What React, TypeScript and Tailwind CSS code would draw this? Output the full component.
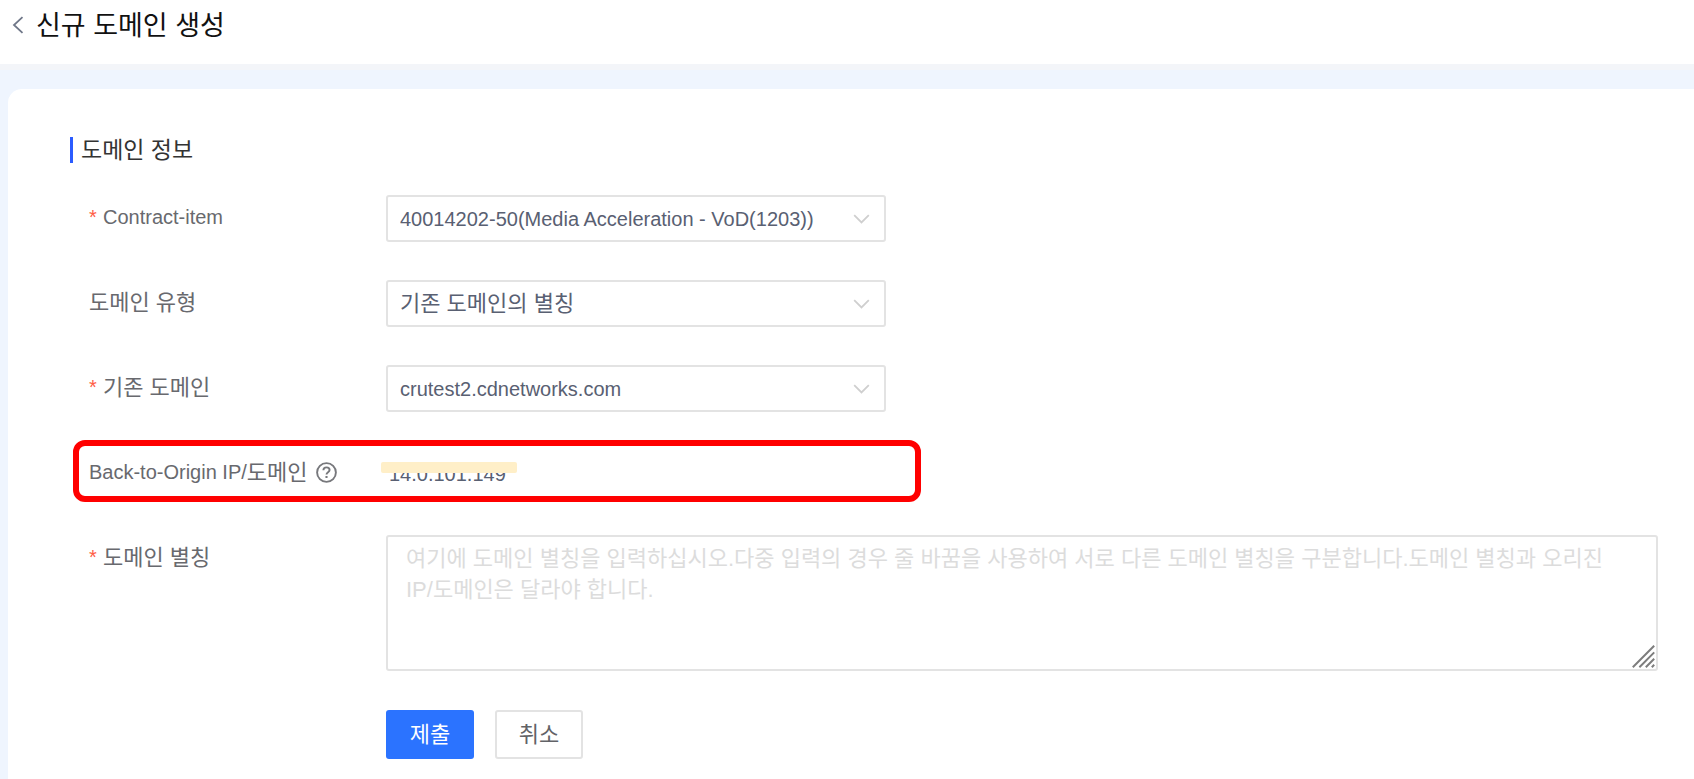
import type { ReactNode } from "react";

const controlBorder = "border-2 border-[#e3e3e3] rounded-[3px]";

function Label({ htmlFor, required, children }: { htmlFor: string; required?: boolean; children: ReactNode }) {
  return (
    <label htmlFor={htmlFor} className="flex h-[44px] w-[297px] shrink-0 items-center text-[#68696e]">
      {required && <span className="w-[14px] text-[20px] text-[#ff5c45]">*</span>}
      {children}
    </label>
  );
}

function SelectField({ id, value, korean }: { id: string; value: string; korean?: boolean }) {
  return (
    <div className="relative w-full max-w-[500px]">
      <select
        id={id}
        defaultValue={value}
        className={`${controlBorder} h-[47px] w-full appearance-none bg-white pr-10 pl-3 text-[#596072] ${korean ? "text-[22px]" : "text-[20px]"}`}
      >
        <option value={value}>{value}</option>
      </select>
      <svg
        className="pointer-events-none absolute top-[19px] right-4 h-[10px] w-[17px]"
        viewBox="0 0 17 10"
        fill="none"
        stroke="#cfcfcf"
        strokeWidth="1.8"
        aria-hidden="true"
      >
        <path d="M1.2 1.2 8.5 8.4l7.3-7.2" />
      </svg>
    </div>
  );
}

export default function App() {
  return (
    <div className="flex min-h-screen flex-col bg-[#eff5fe] font-['Liberation_Sans','Noto_Sans_CJK_KR',sans-serif]">
      <header className="flex h-[70px] items-start gap-3 border-b-6 border-[#f3f5f9] bg-white pt-[6px] pl-3">
        <button type="button" aria-label="뒤로" className="flex h-[38px] w-3 items-center">
          <svg className="h-[18px] w-3" viewBox="0 0 12 18" fill="none" stroke="#6f7788" strokeWidth="1.8" aria-hidden="true">
            <path d="M10.5 1.2 2 9l8.5 7.8" />
          </svg>
        </button>
        <h1 className="text-[27px] leading-10 text-[#111]">신규 도메인 생성</h1>
      </header>

      <main className="mt-[19px] ml-2 flex-1 rounded-tl-[14px] bg-white pt-[47px] pr-9 pb-5 pl-[62px]">
        <h2 className="flex h-7 items-center gap-2 text-[23px] text-[#333]">
          <span className="h-[26px] w-[3px] bg-[#2b5cff]" />
          도메인 정보
        </h2>

        <form className="mt-[31px] flex flex-col gap-[38px] pl-[19px]" onSubmit={(e) => e.preventDefault()}>
          <div className="flex">
            <Label htmlFor="contract" required>
              <span className="text-[20px]">Contract-item</span>
            </Label>
            <SelectField id="contract" value="40014202-50(Media Acceleration - VoD(1203))" />
          </div>

          <div className="flex">
            <Label htmlFor="type">
              <span className="text-[22px]">도메인 유형</span>
            </Label>
            <SelectField id="type" value="기존 도메인의 별칭" korean />
          </div>

          <div className="flex">
            <Label htmlFor="existing" required>
              <span className="text-[22px]">기존 도메인</span>
            </Label>
            <SelectField id="existing" value="crutest2.cdnetworks.com" />
          </div>

          <div className="relative flex h-[47px] max-w-[797px]">
            <Label htmlFor="origin">
              <span className="text-[20px]">Back-to-Origin IP/</span>
              <span className="text-[22px]">도메인</span>
              <svg className="ml-2 h-[21px] w-[21px]" viewBox="0 0 21 21" fill="none" stroke="#77787c" strokeWidth="1.9" aria-hidden="true">
                <circle cx="10.5" cy="10.5" r="9.4" />
                <path d="M7.4 8.3c0-1.8 1.3-2.9 3.1-2.9s3.1 1.1 3.1 2.7c0 2.1-3.1 2.2-3.1 4.4" />
                <path d="M10.5 14v2" strokeWidth="2.1" />
              </svg>
            </Label>
            <output id="origin" className="flex h-[47px] items-center pl-[3px] text-[20px] text-[#596072]">
              14.0.101.149
            </output>
            <span className="absolute top-3 left-[292px] h-[11px] w-[136px] rounded-[2px] bg-[#ffefc8]" />
            <span className="pointer-events-none absolute -top-2.5 -right-[35px] -bottom-[5px] -left-4 rounded-xl border-6 border-[#ff0000]" />
          </div>

          <div className="flex">
            <Label htmlFor="alias" required>
              <span className="text-[22px]">도메인 별칭</span>
            </Label>
            <div className="relative flex flex-1">
              <textarea
                id="alias"
                className={`${controlBorder} h-[136px] w-full resize-none bg-white py-[6px] pr-9 pl-[18px] text-[22px] leading-[31px] text-[#596072] placeholder:text-[#dcdcdc]`}
                placeholder="여기에 도메인 별칭을 입력하십시오.다중 입력의 경우 줄 바꿈을 사용하여 서로 다른 도메인 별칭을 구분합니다.도메인 별칭과 오리진 IP/도메인은 달라야 합니다."
              />
              <svg
                className="pointer-events-none absolute right-[3px] bottom-[3px] h-[23px] w-[23px]"
                viewBox="0 0 23 23"
                stroke="#7d7d7d"
                strokeWidth="2"
                aria-hidden="true"
              >
                <path d="M.8 22.2 22.2.8M7.4 22.2 22.2 7.4M13.8 22.2l8.4-8.4M19.8 22.2l2.4-2.4" />
              </svg>
            </div>
          </div>

          <div className="flex gap-[21px] pt-px pl-[297px] text-[22px]">
            <button type="submit" className="h-[49px] w-[88px] rounded-[3px] bg-[#2b73ff] text-white">
              제출
            </button>
            <button type="button" className={`${controlBorder} h-[49px] w-[88px] bg-white text-[#626367]`}>
              취소
            </button>
          </div>
        </form>
      </main>
    </div>
  );
}
